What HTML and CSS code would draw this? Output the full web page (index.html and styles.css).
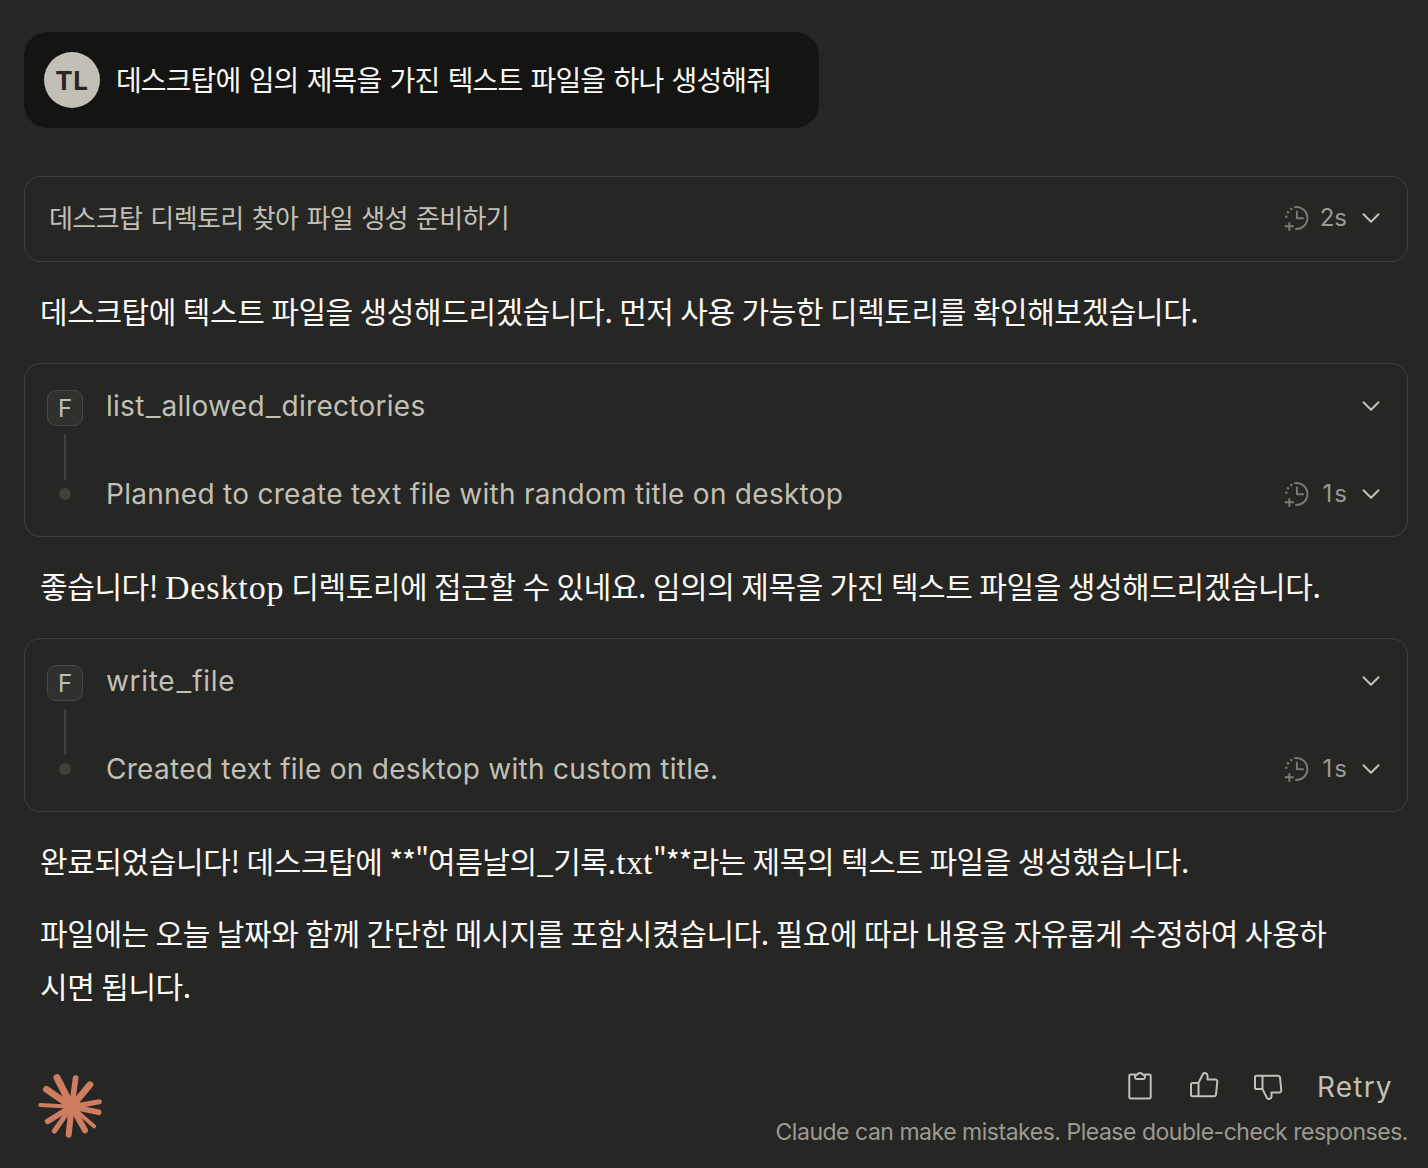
FILE: index.html
```html
<!DOCTYPE html>
<html lang="ko">
<head>
    <meta charset="UTF-8">
    <meta name="viewport" content="width=device-width, initial-scale=1.0">
    <title>Claude</title>
    <link rel="stylesheet" href="styles.css">
</head>
<body>
    <!-- shared icons -->
    <svg class="icon-defs" width="0" height="0">
        <symbol id="icon-time" viewBox="0 0 28 28">
            <path d="M13 3.1 A11 11 0 1 1 14 25"/>
            <path d="M14.9 7.5 V14.3 H21"/>
            <path d="M7.3 19 V26 M3.5 22.3 H11"/>
            <circle class="dot" cx="9.3" cy="5" r="1.2"/>
            <circle class="dot" cx="6" cy="8.3" r="1.2"/>
            <circle class="dot" cx="4.3" cy="12.7" r="1.2"/>
        </symbol>
        <symbol id="icon-chevron" viewBox="0 0 20 20">
            <path d="M2.5 6.3 L10 13.8 L17.5 6.3"/>
        </symbol>
    </svg>

    <div class="chat">
        <div class="user-message">
            <div class="avatar">TL</div>
            <div class="user-text">데스크탑에 임의 제목을 가진 텍스트 파일을 하나 생성해줘</div>
        </div>

        <div class="card">
            <div class="row row-single">
                <span class="label label-ko">데스크탑 디렉토리 찾아 파일 생성 준비하기</span>
                <svg class="time-icon"><use href="#icon-time"/></svg>
                <span class="time">2s</span>
                <svg class="chevron"><use href="#icon-chevron"/></svg>
            </div>
        </div>

        <div class="answer">
            <p>데스크탑에 텍스트 파일을 생성해드리겠습니다. 먼저 사용 가능한 디렉토리를 확인해보겠습니다.</p>
        </div>

        <div class="card steps">
            <div class="rail">
                <div class="badge">F</div>
                <div class="rail-line"></div>
                <div class="rail-dot"></div>
            </div>
            <div class="rows">
                <div class="row">
                    <span class="label">list<span class="underscore">_</span>allowed<span class="underscore">_</span>directories</span>
                    <svg class="chevron"><use href="#icon-chevron"/></svg>
                </div>
                <div class="row">
                    <span class="label">Planned to create text file with random title on desktop</span>
                    <svg class="time-icon"><use href="#icon-time"/></svg>
                    <span class="time time-one">1s</span>
                    <svg class="chevron"><use href="#icon-chevron"/></svg>
                </div>
            </div>
        </div>

        <div class="answer">
            <p>좋습니다! <span class="latin">Desktop</span> 디렉토리에 접근할 수 있네요. 임의의 제목을 가진 텍스트 파일을 생성해드리겠습니다.</p>
        </div>

        <div class="card steps">
            <div class="rail">
                <div class="badge">F</div>
                <div class="rail-line"></div>
                <div class="rail-dot"></div>
            </div>
            <div class="rows">
                <div class="row">
                    <span class="label label-write">write<span class="underscore">_</span>file</span>
                    <svg class="chevron"><use href="#icon-chevron"/></svg>
                </div>
                <div class="row">
                    <span class="label">Created text file on desktop with custom title.</span>
                    <svg class="time-icon"><use href="#icon-time"/></svg>
                    <span class="time time-one">1s</span>
                    <svg class="chevron"><use href="#icon-chevron"/></svg>
                </div>
            </div>
        </div>

        <div class="answer">
            <p>완료되었습니다! 데스크탑에 <span class="marks">**"</span>여름날의_기록<span class="latin latin-ext">.txt</span><span class="marks">"**</span>라는 제목의 텍스트 파일을 생성했습니다.</p>
            <p>파일에는 오늘 날짜와 함께 간단한 메시지를 포함시켰습니다. 필요에 따라 내용을 자유롭게 수정하여 사용하<br>시면 됩니다.</p>
        </div>

        <div class="footer">
            <svg class="logo" viewBox="0 0 192 192">
                <g stroke-linecap="round">
                    <path stroke-width="21" d="M101 98 L57 11"/>
                    <path stroke-width="17" d="M101 98 L113 12"/>
                    <path stroke-width="20" d="M101 98 L156 32"/>
                    <path stroke-width="15" d="M101 98 L184 83"/>
                    <path stroke-width="17" d="M101 98 L182 115"/>
                    <path stroke-width="12" d="M101 98 L168 157"/>
                    <path stroke-width="18" d="M101 98 L141 169"/>
                    <path stroke-width="18" d="M101 98 L92 182"/>
                    <path stroke-width="15" d="M101 98 L49 171"/>
                    <path stroke-width="17" d="M101 98 L29 142"/>
                    <path stroke-width="12" d="M101 98 L7 93"/>
                    <path stroke-width="20" d="M101 98 L25 46"/>
                </g>
                <circle cx="102" cy="97" r="27"/>
            </svg>
            <div class="footer-right">
                <div class="actions">
                    <svg class="action-icon" viewBox="0 0 32 32">
                        <path d="M11 4.5 H6.6 A1.3 1.3 0 0 0 5.3 5.8 V27.2 A1.3 1.3 0 0 0 6.6 28.5 H25.4 A1.3 1.3 0 0 0 26.7 27.2 V5.8 A1.3 1.3 0 0 0 25.4 4.5 H21"/>
                        <path d="M11 5.2 H12.6 C13.2 3.8 14.4 2.9 16 2.9 C17.6 2.9 18.8 3.8 19.4 5.2 H21 V7.3 A1.6 1.6 0 0 1 19.4 8.9 H12.6 A1.6 1.6 0 0 1 11 7.3 Z"/>
                    </svg>
                    <svg class="action-icon" viewBox="0 0 32 32">
                        <path d="M10.5 12.9 H4.3 A1.3 1.3 0 0 0 3 14.2 V24.9 A1.3 1.3 0 0 0 4.3 26.2 H26 A2 2 0 0 0 28 24.5 L29.3 11.5 A1.8 1.8 0 0 0 27.5 9.6 H19.5 V5.4 A2.6 2.6 0 0 0 15.1 3.8 L10.5 12.9 V26.2"/>
                    </svg>
                    <svg class="action-icon" viewBox="0 0 32 32">
                        <path d="M10.5 19.1 H4.3 A1.3 1.3 0 0 1 3 17.8 V7.1 A1.3 1.3 0 0 1 4.3 5.8 H26 A2 2 0 0 1 28 7.5 L29.3 20.5 A1.8 1.8 0 0 1 27.5 22.4 H19.5 V26.6 A2.6 2.6 0 0 1 15.1 28.2 L10.5 19.1 V5.8"/>
                    </svg>
                    <span class="retry">Retry</span>
                </div>
                <div class="disclaimer">Claude can make mistakes. Please double-check responses.</div>
            </div>
        </div>
    </div>
</body>
</html>
```
FILE: styles.css
```css
* {
    box-sizing: border-box;
}

body {
    margin: 0;
    background: #262624;
    color: #faf9f5;
    font-family: Inter, "Noto Sans CJK KR", sans-serif;
}

.icon-defs {
    display: block;
}

.chat {
    padding: 32px 20px 0 24px;
    white-space: nowrap;
}

.user-message {
    display: flex;
    align-items: center;
    width: 795px;
    height: 96px;
    padding: 0 20px;
    gap: 16px;
    margin-bottom: 48px;
    background: #141413;
    border-radius: 24px;
}

.avatar {
    width: 56px;
    height: 56px;
    border-radius: 50%;
    background: #c2c0b6;
    color: #262624;
    font-size: 26px;
    font-weight: 700;
    line-height: 57px;
    letter-spacing: 0.8px;
    text-align: center;
}

.user-text {
    padding-bottom: 3px;
    font-family: "Noto Sans CJK KR", sans-serif;
    font-size: 28px;
    font-weight: 400;
    line-height: 40px;
    letter-spacing: -0.9px;
    word-spacing: 1.4px;
}

.card {
    border: 1px solid #40403c;
    border-radius: 16px;
    padding: 0 24px;
}

.row {
    display: flex;
    align-items: center;
    height: 84px;
    padding-bottom: 1px;
}

.row-single {
    padding-bottom: 3px;
}

.label {
    flex: 1;
    color: #c2c0b6;
    font-size: 28px;
    line-height: 34px;
    letter-spacing: 0.28px;
}

.label-write {
    letter-spacing: 0.7px;
}

.label-ko {
    padding-bottom: 2px;
    font-family: "Noto Sans CJK KR", sans-serif;
    font-size: 26px;
    letter-spacing: -0.6px;
    word-spacing: 1.4px;
}

.underscore {
    margin-left: 1px;
    font-size: 33px;
    font-weight: 300;
    line-height: 1;
    letter-spacing: 1px;
}

.time-icon,
.chevron {
    flex: none;
    fill: none;
    stroke: #c2c0b6;
    stroke-linecap: round;
    stroke-linejoin: round;
}

.time-icon {
    width: 28px;
    height: 28px;
    stroke: #7c7a73;
    stroke-width: 1.9;
}

.dot {
    fill: #7c7a73;
    stroke: none;
}

.time {
    width: 37px;
    margin-right: 14px;
    color: #9c9a92;
    font-size: 24px;
    text-align: right;
}

.time-one {
    letter-spacing: 2px;
    margin-right: 12px;
    width: 39px;
}

.chevron {
    width: 20px;
    height: 20px;
    margin-right: 2px;
    stroke-width: 2;
}

.steps {
    display: flex;
    height: 174px;
    padding-left: 22px;
}

.rail {
    display: flex;
    flex-direction: column;
    align-items: center;
    gap: 8px;
    width: 36px;
    margin-right: 23px;
    padding-top: 26px;
}

.badge {
    width: 36px;
    height: 36px;
    border: 1px solid #484844;
    border-radius: 9px;
    background: #30302e;
    color: #c2c0b6;
    font-size: 24px;
    line-height: 35px;
    text-align: center;
}

.rail-line {
    width: 2px;
    height: 46px;
    background: #40403c;
}

.rail-dot {
    width: 12px;
    height: 12px;
    border-radius: 50%;
    background: #40403c;
}

.rows {
    display: flex;
    flex: 1;
    flex-direction: column;
    gap: 4px;
}

.answer {
    padding: 22px 16px 26px;
    font-family: "Noto Sans CJK KR", sans-serif;
    font-size: 30px;
    line-height: 53px;
    letter-spacing: -0.4px;
    word-spacing: -1.2px;
}

.answer p {
    margin: 0 0 19px;
}

.answer p:last-child {
    margin-bottom: 0;
}

.latin {
    font-family: "Liberation Serif", serif;
    font-size: 34px;
    line-height: 1;
    letter-spacing: 0.9px;
    vertical-align: -1px;
}

.latin-ext {
    letter-spacing: 0.2px;
}

.marks {
    letter-spacing: -1.2px;
}

.footer {
    display: flex;
    justify-content: space-between;
    margin-top: 32px;
}

.logo {
    width: 64px;
    height: 64px;
    margin: 4px 0 0 14px;
    fill: #cf7d60;
    stroke: #cf7d60;
}

.logo circle {
    stroke: none;
}

.footer-right {
    display: flex;
    flex-direction: column;
    align-items: flex-end;
}

.actions {
    display: flex;
    align-items: center;
    gap: 32px;
    height: 32px;
    margin-right: 16px;
}

.action-icon {
    width: 32px;
    height: 32px;
    fill: none;
    stroke: #c2c0b6;
    stroke-width: 2;
    stroke-linejoin: round;
    stroke-linecap: round;
}

.retry {
    width: 76px;
    padding: 2px 0 0 1px;
    color: #c2c0b6;
    font-size: 28px;
    line-height: 32px;
    letter-spacing: 1.2px;
}

.disclaimer {
    margin-top: 14px;
    color: #9c9a92;
    font-size: 23px;
    line-height: 32px;
    letter-spacing: -0.48px;
}
```
